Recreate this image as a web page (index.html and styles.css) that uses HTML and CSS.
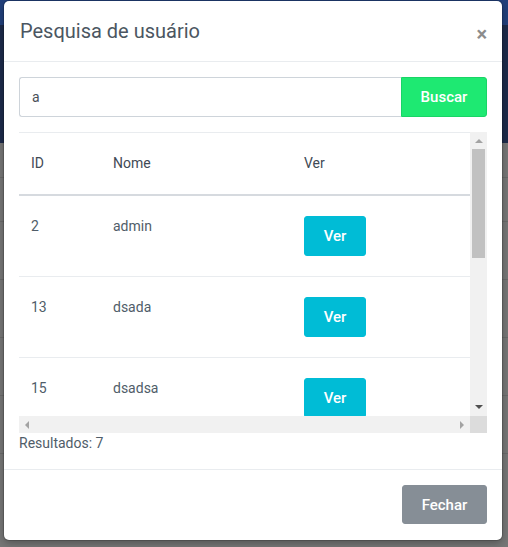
FILE: index.html
```html
<!DOCTYPE html>
<html lang="pt">
<head>
<meta charset="utf-8">
<title>Pesquisa de usuário</title>
<link rel="stylesheet" href="styles.css">
</head>
<body>
<div class="page">
  <div class="page-nav"></div>
  <div class="page-hero"></div>
  <div class="page-list">
    <div class="page-row r1"></div>
    <div class="page-row r2"></div>
    <div class="page-row r3"></div>
    <div class="page-row r3"></div>
    <div class="page-row r3"></div>
    <div class="page-row r3"></div>
  </div>
</div>

<div class="modal">
  <div class="modal-header">
    <h5 class="modal-title">Pesquisa de usuário</h5>
    <span class="close">×</span>
  </div>
  <div class="modal-body">
    <div class="search">
      <input class="search-input" type="text" value="a">
      <button class="btn btn-green">Buscar</button>
    </div>
    <div class="results">
      <div class="viewport">
        <table class="table">
          <thead>
            <tr><th class="c-id">ID</th><th class="c-name">Nome</th><th class="c-ver">Ver</th></tr>
          </thead>
          <tbody>
            <tr><td>2</td><td>admin</td><td><button class="btn btn-cyan">Ver</button></td></tr>
            <tr><td>13</td><td>dsada</td><td><button class="btn btn-cyan">Ver</button></td></tr>
            <tr><td>15</td><td>dsadsa</td><td><button class="btn btn-cyan">Ver</button></td></tr>
          </tbody>
        </table>
      </div>
      <div class="vbar">
        <span class="arrow arrow-up"></span>
        <div class="vtrack"><div class="vthumb"></div></div>
        <span class="arrow arrow-down"></span>
      </div>
      <div class="hbar">
        <span class="arrow arrow-left"></span>
        <span class="arrow arrow-right"></span>
      </div>
      <div class="corner"></div>
    </div>
    <p class="count">Resultados: 7</p>
  </div>
  <div class="modal-footer">
    <button class="btn btn-grey">Fechar</button>
  </div>
</div>
</body>
</html>
```
FILE: styles.css
```css
* { box-sizing: border-box; }

html, body {
  margin: 0;
  height: 547px;
  overflow: hidden;
}

body {
  font-family: Roboto, "Liberation Sans", Arial, sans-serif;
  background: #777777;
}

.page-nav { height: 25px; background: #22407c; }
.page-hero { height: 118px; background: #1d2b4b; }
.page-row { border-bottom: 1px solid #6a6a6a; }
.r1 { height: 35px; }
.r2 { height: 44px; }
.r3 { height: 58px; }

.modal {
  position: absolute;
  left: 4px;
  top: 1px;
  width: 498px;
  height: 539px;
  background: #fff;
  border-radius: 5px;
  box-shadow: 0 0 0 1px rgba(0, 0, 0, 0.15), 0 3px 8px rgba(0, 0, 0, 0.3);
  display: flex;
  flex-direction: column;
}

.modal-header {
  display: flex;
  justify-content: space-between;
  align-items: flex-start;
  height: 61px;
  padding: 15px 15px 15px 16px;
  border-bottom: 1px solid #e9ecef;
}

.modal-title {
  margin: 0;
  font-size: 20px;
  line-height: 30px;
  font-weight: 400;
  color: #4b5661;
}

.close {
  font-size: 20px;
  font-weight: 700;
  line-height: 24px;
  margin-top: 6px;
  color: #8c8c8c;
}

.modal-body {
  padding: 15px 15px 14px 15px;
  flex: 1;
}

.search {
  display: flex;
  height: 40px;
}

.search-input {
  flex: 1;
  min-width: 0;
  border: 1px solid #ced4da;
  border-right: 0;
  border-radius: 3px 0 0 3px;
  padding: 0 12px;
  font-family: Roboto, "Liberation Sans", Arial, sans-serif;
  font-size: 14px;
  color: #495057;
  outline: none;
}

.btn {
  font-family: Roboto, "Liberation Sans", Arial, sans-serif;
  font-size: 15px;
  font-weight: 500;
  color: #fff;
  border: 1px solid transparent;
  border-radius: 3px;
  padding: 0 20px;
  cursor: pointer;
}

.btn-green {
  width: 86px;
  padding: 0;
  background: #1ee972;
  border-color: #19d466;
  border-radius: 0 3px 3px 0;
}

.btn-cyan {
  width: 62px;
  height: 40px;
  padding: 0;
  background: #00bcd6;
  border-color: #00bcd6;
}

.btn-grey {
  width: 85px;
  height: 39px;
  padding: 0;
  background: #868e96;
  border-color: #868e96;
}

.results {
  margin-top: 15px;
  display: grid;
  grid-template-columns: 1fr 17px;
  grid-template-rows: 284px 17px;
}

.viewport {
  overflow: hidden;
}

.table {
  width: 470px;
  border-collapse: collapse;
  font-size: 14px;
  color: #505d69;
  border-top: 1px solid #e9ecef;
}

.table th {
  text-align: left;
  font-weight: 400;
  line-height: 21px;
  padding: 20px 12px 20px 12px;
  border-bottom: 2px solid #d6dadf;
  color: #3f4a55;
}

.c-id { width: 82px; }
.c-name { width: 191px; }

.table td {
  vertical-align: top;
  line-height: 21px;
  padding: 20px 12px 20px 12px;
  border-bottom: 1px solid #e9ecef;
}

.table td .btn { display: block; }

.vbar {
  background: #f1f1f1;
  display: flex;
  flex-direction: column;
  align-items: center;
}

.vtrack {
  flex: 1;
  width: 100%;
  padding: 0 2px;
}

.vthumb {
  height: 109px;
  background: #c1c1c1;
}

.hbar {
  background: #f1f1f1;
  display: flex;
  justify-content: space-between;
  align-items: center;
  padding: 0 6px;
}

.corner {
  background: #dcdcdc;
}

.arrow {
  display: block;
  width: 0;
  height: 0;
  flex: none;
}

.arrow-up {
  margin: 7px 0 6px;
  border-left: 4px solid transparent;
  border-right: 4px solid transparent;
  border-bottom: 4px solid #a3a3a3;
}

.arrow-down {
  margin: 6px 0 7px;
  border-left: 4px solid transparent;
  border-right: 4px solid transparent;
  border-top: 4px solid #505050;
}

.arrow-left {
  border-top: 4px solid transparent;
  border-bottom: 4px solid transparent;
  border-right: 4px solid #a3a3a3;
}

.arrow-right {
  border-top: 4px solid transparent;
  border-bottom: 4px solid transparent;
  border-left: 4px solid #a3a3a3;
}

.count {
  margin: 0;
  font-size: 14px;
  line-height: 21px;
  color: #505d69;
}

.modal-footer {
  display: flex;
  justify-content: flex-end;
  padding: 15px 15px 16px;
  border-top: 1px solid #e9ecef;
}
```
